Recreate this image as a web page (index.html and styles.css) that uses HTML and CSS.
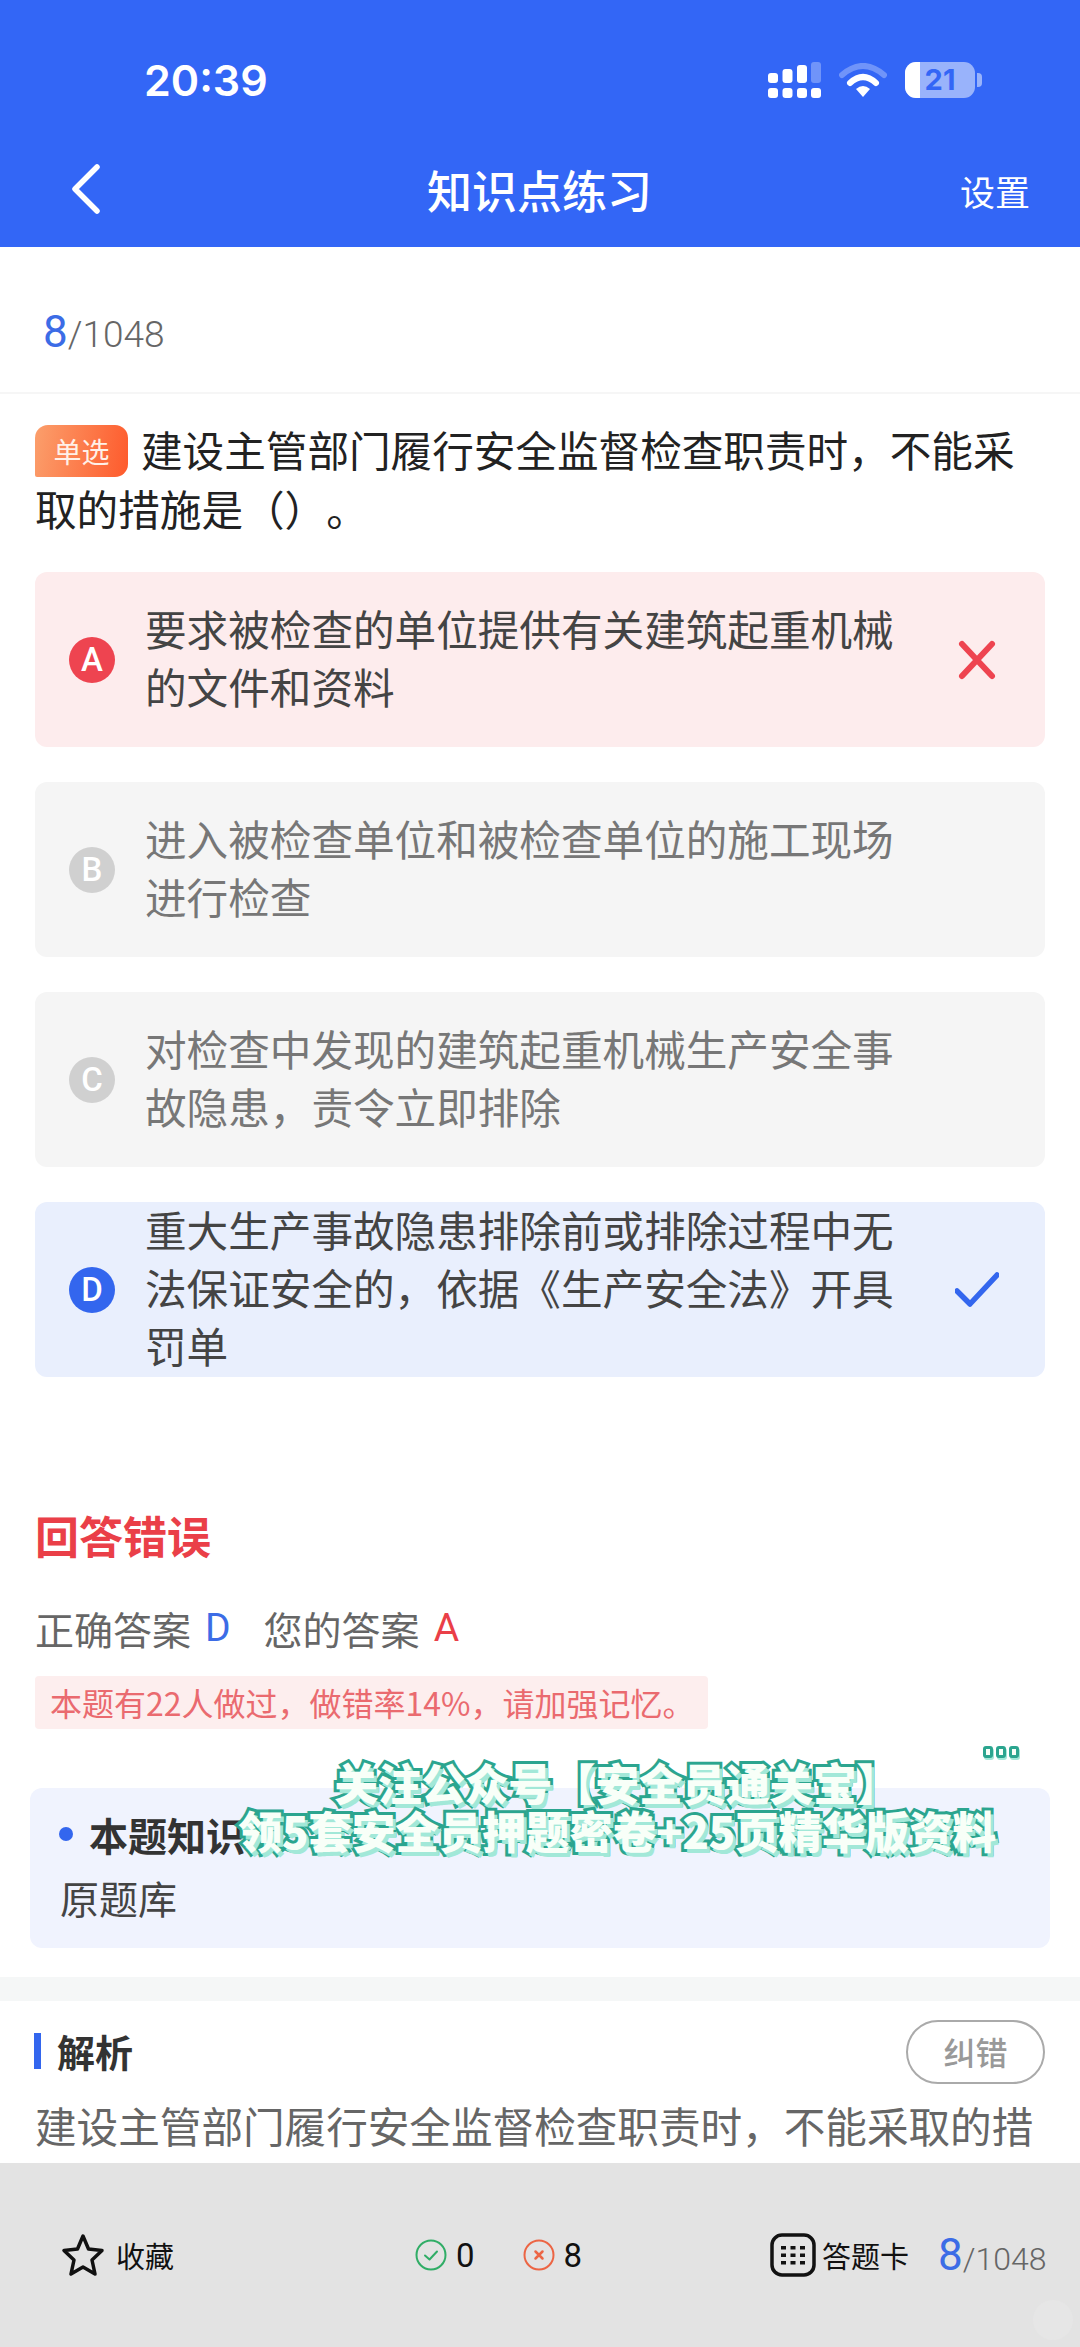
FILE: index.html
```html
<!DOCTYPE html>
<html lang="zh-CN">
<head>
    <meta charset="UTF-8">
    <meta name="viewport" content="width=device-width, initial-scale=1.0">
    <title>知识点练习</title>
    <link rel="stylesheet" href="styles.css">
</head>
<body>
    <div class="app">
        <header class="header">
            <div class="status">
                <span class="time">20:39</span>
                <div class="status-icons">
                    <svg class="signal" width="53" height="36" viewBox="0 0 53 36">
                        <rect x="0" y="11" width="10" height="10" rx="3" fill="#fff"/>
                        <rect x="14.500" y="7" width="10" height="14" rx="3" fill="#fff"/>
                        <rect x="29" y="3" width="10" height="18" rx="3" fill="#fff"/>
                        <rect x="43" y="0" width="10" height="21" rx="3" fill="#fff" opacity="0.3"/>
                        <rect x="0" y="26" width="10" height="10" rx="3" fill="#fff"/>
                        <rect x="14.500" y="26" width="10" height="10" rx="3" fill="#fff"/>
                        <rect x="29" y="26" width="10" height="10" rx="3" fill="#fff"/>
                        <rect x="43" y="26" width="10" height="10" rx="3" fill="#fff"/>
                    </svg>
                    <svg class="wifi" width="48" height="34" viewBox="0 0 48 34">
                        <path d="M3 12 Q24 -6 45 12" fill="none" stroke="#fff" stroke-opacity="0.3" stroke-width="6" stroke-linecap="round"/>
                        <path d="M11 20 Q24 8 37 20" fill="none" stroke="#fff" stroke-width="6" stroke-linecap="round"/>
                        <path d="M17 26 Q24 20 31 26 L24 34 Z" fill="#fff"/>
                    </svg>
                    <div class="battery">
                        <div class="battery-body">
                            <div class="battery-fill"></div>
                            <span class="battery-num">21</span>
                        </div>
                        <div class="battery-nub"></div>
                    </div>
                </div>
            </div>
            <div class="nav">
                <svg class="back" width="30" height="50" viewBox="0 0 30 50">
                    <path d="M26 3 L4 25 L26 47" fill="none" stroke="#fff" stroke-width="5.500" stroke-linecap="round" stroke-linejoin="round"/>
                </svg>
                <h1 class="nav-title">知识点练习</h1>
                <span class="nav-set">设置</span>
            </div>
        </header>

        <main class="content">
            <div class="counter">
                <span class="num-cur">8</span><span class="num-all">/1048</span>
            </div>

            <div class="question">
                <span class="tag">单选</span>建设主管部门履行安全监督检查职责时，不能采取的措施是（）。
            </div>

            <div class="options">
                <div class="option option-wrong">
                    <span class="letter">A</span>
                    <p class="option-text">要求被检查的单位提供有关建筑起重机械的文件和资料</p>
                    <svg class="mark" width="44" height="44" viewBox="0 0 44 44">
                        <path d="M7 6 L37 38 M37 6 L7 38" fill="none" stroke="#ee4450" stroke-width="6" stroke-linecap="round"/>
                    </svg>
                </div>
                <div class="option">
                    <span class="letter">B</span>
                    <p class="option-text">进入被检查单位和被检查单位的施工现场进行检查</p>
                </div>
                <div class="option">
                    <span class="letter">C</span>
                    <p class="option-text">对检查中发现的建筑起重机械生产安全事故隐患，责令立即排除</p>
                </div>
                <div class="option option-right">
                    <span class="letter">D</span>
                    <p class="option-text">重大生产事故隐患排除前或排除过程中无法保证安全的，依据《生产安全法》开具罚单</p>
                    <svg class="mark" width="44" height="44" viewBox="0 0 44 44">
                        <path d="M2 23 L15 36 L42 7" fill="none" stroke="#3366ee" stroke-width="5.500" stroke-linecap="round" stroke-linejoin="round"/>
                    </svg>
                </div>
            </div>

            <h2 class="result-title">回答错误</h2>
            <div class="answers">
                <span>正确答案</span><span class="ans-right">D</span>
                <span class="ans-label">您的答案</span><span class="ans-wrong">A</span>
            </div>
            <div class="warn">本题有22人做过，做错率14%，请加强记忆。</div>

            <div class="point-card">
                <div class="point-head"><span class="point-dot"></span>本题知识</div>
                <div class="point-body">原题库</div>
            </div>

            <div class="band"></div>

            <div class="analysis-head">
                <h3 class="analysis-title">解析</h3>
                <span class="report">纠错</span>
            </div>
            <p class="analysis-text">建设主管部门履行安全监督检查职责时，不能采取的措</p>
        </main>

        <footer class="bottom">
            <div class="fav">
                <svg width="44" height="44" viewBox="0 0 44 44">
                    <path d="M22 3 L27.500 16 L41 17.500 L31 27 L34 41 L22 34 L10 41 L13 27 L3 17.500 L16.500 16 Z" fill="none" stroke="#111" stroke-width="3.500" stroke-linejoin="round"/>
                </svg>
                <span>收藏</span>
            </div>
            <div class="score">
                <svg width="32" height="32" viewBox="0 0 32 32">
                    <circle cx="16" cy="16" r="14.500" fill="none" stroke="#30ad66" stroke-width="2"/>
                    <path d="M10 16.500 L14.500 20.500 L22 12.500" fill="none" stroke="#30ad66" stroke-width="2" stroke-linecap="round" stroke-linejoin="round"/>
                </svg>
                <span class="score-num">0</span>
                <svg class="score-x" width="32" height="32" viewBox="0 0 32 32">
                    <circle cx="16" cy="16" r="14.500" fill="none" stroke="#ec6544" stroke-width="2"/>
                    <path d="M12.500 12.500 L19.500 19.500 M19.500 12.500 L12.500 19.500" fill="none" stroke="#ec6544" stroke-width="2.500" stroke-linecap="round"/>
                </svg>
                <span class="score-num">8</span>
            </div>
            <div class="sheet">
                <svg width="46" height="44" viewBox="0 0 46 44">
                    <rect x="2" y="2" width="42" height="40" rx="10" fill="none" stroke="#111" stroke-width="3.500"/>
                    <g fill="#111">
                        <rect x="11" y="13" width="5" height="3.500"/><rect x="20.500" y="13" width="5" height="3.500"/><rect x="30" y="13" width="5" height="3.500"/>
                        <rect x="11" y="20.500" width="5" height="3.500"/><rect x="20.500" y="20.500" width="5" height="3.500"/><rect x="30" y="20.500" width="5" height="3.500"/>
                        <rect x="11" y="28" width="5" height="3.500"/><rect x="20.500" y="28" width="5" height="3.500"/><rect x="30" y="28" width="5" height="3.500"/>
                    </g>
                </svg>
                <span>答题卡</span>
                <span class="sheet-count"><span class="num-cur">8</span><span class="num-all small">/1048</span></span>
            </div>
        </footer>

        <div class="caption">
            <div class="caption-dots"><i></i><i></i><i></i></div>
            <div class="caption-line">关注公众号【安全员通关宝】</div>
            <div class="caption-line">领5套安全员押题密卷+25页精华版资料</div>
        </div>
        <div class="corner-mark"></div>
    </div>
</body>
</html>
```

FILE: styles.css
```css
* {
    box-sizing: border-box;
}
body {
    margin: 0;
    font-family: "Noto Sans CJK SC", "Noto Sans", sans-serif;
    background: #ffffff;
    color: #444444;
    text-spacing-trim: space-all;
}
h1, h2, h3, p {
    margin: 0;
    font-weight: normal;
}
.app {
    position: relative;
    width: 1080px;
    height: 2347px;
    display: flex;
    flex-direction: column;
    overflow: hidden;
}

/* header */
.header {
    height: 247px;
    background: #3366f6;
    color: #ffffff;
    padding: 56px 50px 0 71px;
}
.status {
    display: flex;
    align-items: center;
    justify-content: space-between;
    height: 48px;
}
.time {
    font-family: Inter, sans-serif;
    font-size: 43px;
    font-weight: 600;
    margin-left: 73px;
}
.status-icons {
    display: flex;
    align-items: center;
    gap: 18px;
    margin-right: 48px;
}
.battery {
    display: flex;
    align-items: center;
    gap: 2px;
}
.battery-body {
    position: relative;
    width: 70px;
    height: 36px;
    border-radius: 11px;
    background: rgba(255, 255, 255, 0.5);
    overflow: hidden;
    text-align: center;
}
.battery-fill {
    position: absolute;
    left: 0;
    top: 0;
    bottom: 0;
    width: 15px;
    background: #ffffff;
}
.battery-num {
    position: relative;
    font-family: Inter, sans-serif;
    font-size: 29px;
    font-weight: 700;
    line-height: 36px;
    color: #3366f6;
}
.battery-nub {
    width: 5px;
    height: 14px;
    border-radius: 0 4px 4px 0;
    background: rgba(255, 255, 255, 0.5);
}
.nav {
    display: flex;
    align-items: center;
    justify-content: space-between;
    margin-top: 60px;
    height: 50px;
}
.nav-title {
    font-size: 45px;
    font-weight: 500;
    margin-left: 18px;
}
.nav-set {
    font-size: 35px;
    margin-top: 2px;
}

/* content */
.content {
    flex: 1;
    min-height: 0;
    overflow: hidden;
}
.counter {
    height: 147px;
    padding: 60px 0 0 43px;
    border-bottom: 2px solid #f6f6f6;
    line-height: 50px;
}
.num-cur {
    font-family: Roboto, sans-serif;
    font-size: 44px;
    font-weight: 400;
    color: #3c6ce6;
}
.num-all {
    font-family: Roboto, sans-serif;
    font-size: 37px;
    font-weight: 300;
    color: #666666;
}
.num-all.small {
    font-size: 32px;
}
.question {
    margin-top: 26px;
    padding: 0 35px;
    font-size: 41.6px;
    line-height: 59px;
    color: #222222;
}
.tag {
    display: inline-block;
    width: 93px;
    height: 52px;
    margin-top: 5px;
    margin-right: 13px;
    border-radius: 13px 13px 13px 2px;
    background: linear-gradient(100deg, #fb9f6c, #fe5a2c);
    color: #fff0e8;
    font-size: 28px;
    line-height: 52px;
    text-align: center;
    vertical-align: top;
}
.options {
    margin-top: 34px;
    padding: 0 35px;
    display: flex;
    flex-direction: column;
    gap: 35px;
}
.option {
    height: 175px;
    display: flex;
    align-items: center;
    padding-left: 34px;
    border-radius: 12px;
    background: #f5f5f5;
    color: #777777;
}
.option-wrong {
    background: #fdeced;
    color: #444444;
}
.option-right {
    background: #e9effd;
    color: #444444;
}
.letter {
    flex: none;
    width: 46px;
    height: 46px;
    border-radius: 50%;
    background: #d0d0d0;
    color: #ffffff;
    font-family: Roboto, sans-serif;
    font-size: 33px;
    font-weight: 500;
    line-height: 46px;
    text-align: center;
}
.option-wrong .letter {
    background: #ee4450;
}
.option-right .letter {
    background: #3366ee;
}
.option-text {
    width: 752px;
    margin-top: -6px;
    margin-left: 30px;
    font-size: 41.6px;
    line-height: 58px;
}
.mark {
    margin-left: 58px;
}

/* result */
.result-title {
    margin-top: 128px;
    padding-left: 35px;
    font-size: 44px;
    font-weight: 700;
    line-height: 60px;
    color: #ea3f48;
}
.answers {
    margin-top: 35px;
    padding-left: 35px;
    font-size: 39px;
    line-height: 56px;
    color: #666666;
    display: flex;
}
.ans-right, .ans-wrong {
    font-family: Roboto, sans-serif;
    font-size: 39px;
    font-weight: 400;
    margin-left: 14px;
}
.ans-right {
    color: #3c6ce6;
}
.ans-wrong {
    color: #ea3f48;
}
.ans-label {
    margin-left: 33px;
}
.warn {
    width: 673px;
    height: 53px;
    margin: 20px 0 0 35px;
    padding-left: 15px;
    border-radius: 4px;
    background: #fdeeee;
    color: #ea6a6f;
    font-size: 32px;
    line-height: 53px;
    white-space: nowrap;
}
.point-card {
    width: 1020px;
    height: 160px;
    margin: 59px 0 0 30px;
    padding: 19px 30px 0;
    border-radius: 12px;
    background: #f0f3fe;
}
.point-head {
    display: flex;
    align-items: center;
    margin-left: -1px;
    font-size: 39px;
    font-weight: 700;
    line-height: 54px;
    color: #333333;
}
.point-dot {
    width: 14px;
    height: 14px;
    margin-right: 16px;
    border-radius: 50%;
    background: #3366ee;
}
.point-body {
    margin-top: 9px;
    font-size: 39px;
    line-height: 54px;
    color: #444444;
}
.band {
    height: 24px;
    margin-top: 29px;
    background: #f5f7f7;
}

/* analysis */
.analysis-head {
    display: flex;
    align-items: center;
    justify-content: space-between;
    height: 64px;
    margin-top: 19px;
    padding: 0 35px 0 34px;
}
.analysis-title {
    margin-top: -2px;
    border-left: 7px solid #3366ee;
    padding-left: 16px;
    font-size: 38px;
    font-weight: 700;
    line-height: 36px;
    color: #333333;
}
.report {
    width: 139px;
    height: 64px;
    border: 2.500px solid #aaaaaa;
    border-radius: 32px;
    font-size: 32px;
    font-weight: 500;
    line-height: 58px;
    text-align: center;
    color: #999999;
}
.analysis-text {
    margin-top: 12px;
    padding: 0 35px;
    font-size: 41.6px;
    line-height: 58px;
    color: #666666;
    white-space: nowrap;
}

/* bottom bar */
.bottom {
    height: 184px;
    display: flex;
    align-items: center;
    background: #e3e3e3;
    color: #111111;
    font-size: 29px;
}
.fav, .score, .sheet {
    display: flex;
    align-items: center;
}
.fav {
    width: 354px;
    padding-left: 61px;
    gap: 11px;
}
.score {
    width: 416px;
    padding-left: 61px;
}
.score-num {
    font-family: Roboto, sans-serif;
    font-size: 33px;
    font-weight: 400;
    margin-left: 9px;
}
.score-x {
    margin-left: 48px;
}
.sheet {
    gap: 6px;
}
.sheet-count {
    margin-left: 23px;
}

/* overlays */
.caption {
    position: absolute;
    left: 0;
    right: 0;
    top: 1758px;
    text-align: center;
    pointer-events: none;
}
.caption-line {
    position: relative;
    left: 77px;
    font-size: 44px;
    font-weight: 900;
    line-height: 48px;
    color: #f8fff8;
    letter-spacing: -0.5px;
    -webkit-text-stroke: 6px #2ba58f;
    paint-order: stroke fill;
    text-shadow: 3px 4px 0 #a2e8d8;
    white-space: nowrap;
}
.caption-dots {
    position: absolute;
    left: 983px;
    top: -12px;
    display: flex;
    gap: 3px;
}
.caption-dots i {
    width: 10px;
    height: 12px;
    border: 3px solid #2ba58f;
    border-radius: 3px;
    background: #f8fff8;
    box-shadow: 1px 2px 0 #a2e8d8;
}
.corner-mark {
    position: absolute;
    right: 7px;
    bottom: 7px;
    width: 40px;
    height: 40px;
    border-radius: 50%;
    background: #e6e6e6;
}
```
